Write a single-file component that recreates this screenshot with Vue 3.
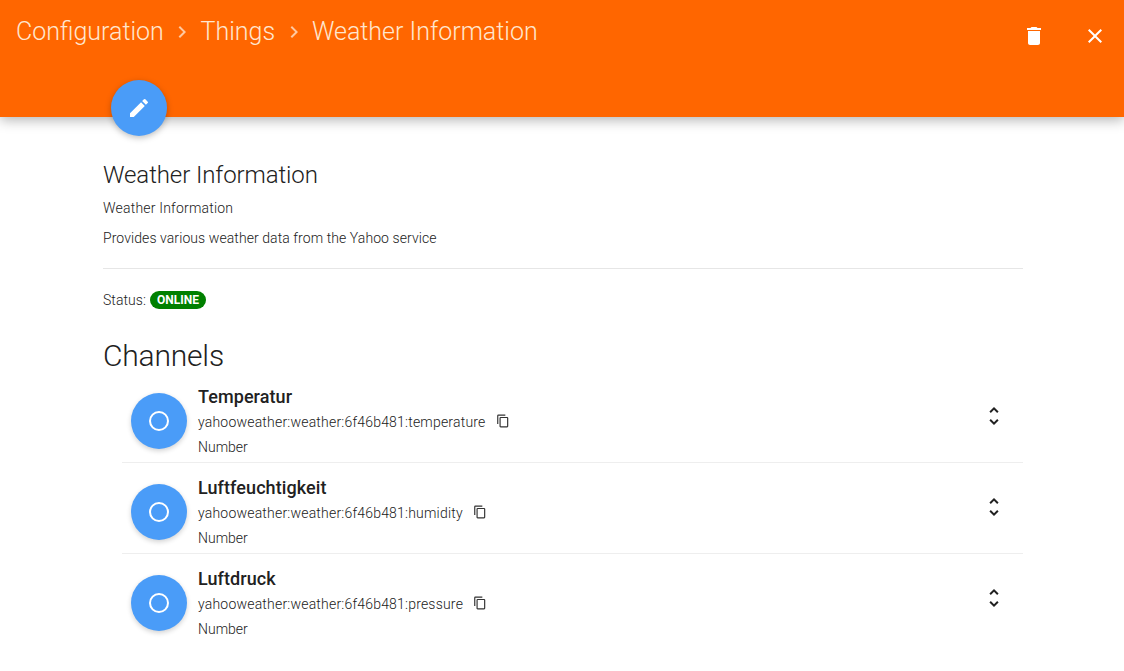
<script setup>
const channels = [
  { name: 'Temperatur', uid: 'yahooweather:weather:6f46b481:temperature', type: 'Number' },
  { name: 'Luftfeuchtigkeit', uid: 'yahooweather:weather:6f46b481:humidity', type: 'Number' },
  { name: 'Luftdruck', uid: 'yahooweather:weather:6f46b481:pressure', type: 'Number' },
]
</script>

<template>
  <div class="page">
    <header class="bar">
      <div class="crumbs">
        <span>Configuration</span>
        <svg class="chev" viewBox="0 0 24 24"><path d="M8.6 16.6 13.2 12 8.6 7.4 10 6l6 6-6 6z" /></svg>
        <span>Things</span>
        <svg class="chev" viewBox="0 0 24 24"><path d="M8.6 16.6 13.2 12 8.6 7.4 10 6l6 6-6 6z" /></svg>
        <span>Weather Information</span>
      </div>
      <div class="actions">
        <svg class="act" viewBox="0 0 24 24"><path d="M6 19c0 1.1.9 2 2 2h8c1.100 0 2-.9 2-2V7H6v12zM19 4h-3.500l-1-1h-5l-1 1H5v2h14V4z" /></svg>
        <svg class="act" viewBox="0 0 24 24"><path d="M19 6.410 17.590 5 12 10.590 6.410 5 5 6.410 10.590 12 5 17.590 6.410 19 12 13.410 17.590 19 19 17.590 13.410 12z" /></svg>
      </div>
      <button class="fab">
        <svg viewBox="0 0 24 24"><path d="M3 17.250V21h3.750L17.810 9.940l-3.750-3.750L3 17.250zM20.710 7.040a1 1 0 0 0 0-1.410l-2.340-2.340a1 1 0 0 0-1.410 0l-1.830 1.830 3.750 3.750 1.830-1.830z" /></svg>
      </button>
    </header>

    <main class="content">
      <h2 class="thing">Weather Information</h2>
      <p class="label">Weather Information</p>
      <p class="desc">Provides various weather data from the Yahoo service</p>
      <div class="status">
        <span>Status:</span>
        <span class="badge">ONLINE</span>
      </div>
      <h1 class="channels">Channels</h1>
      <ul class="list">
        <li v-for="c in channels" :key="c.uid" class="row">
          <div class="avatar"><span class="ring"></span></div>
          <div class="text">
            <div class="name">{{ c.name }}</div>
            <div class="uid">
              <span>{{ c.uid }}</span>
              <svg class="copy" viewBox="0 0 24 24"><path d="M16 1H4a2 2 0 0 0-2 2v14h2V3h12V1zm3 4H8a2 2 0 0 0-2 2v14c0 1.100.9 2 2 2h11a2 2 0 0 0 2-2V7a2 2 0 0 0-2-2zm0 16H8V7h11v14z" /></svg>
            </div>
            <div class="type">{{ c.type }}</div>
          </div>
          <svg class="unfold" viewBox="0 0 24 24"><path d="M12 5.830 15.170 9l1.410-1.410L12 3 7.410 7.590 8.830 9 12 5.830zm0 12.340L8.830 15l-1.410 1.410L12 21l4.590-4.590L15.170 15 12 18.170z" /></svg>
        </li>
      </ul>
    </main>
  </div>
</template>

<style>
html, body { margin: 0; background: #fff; overflow: hidden; }
</style>

<style scoped>
.page {
  height: 671px;
  overflow: hidden;
  font-family: Roboto, "Liberation Sans", sans-serif;
  color: #212121;
  background: #fff;
}
.bar {
  position: relative;
  height: 117px;
  box-sizing: border-box;
  padding: 14px 16px 0;
  background: #ff6600;
  display: flex;
  justify-content: space-between;
  align-items: flex-start;
  box-shadow: 0 3px 12px rgba(0, 0, 0, 0.3);
}
.crumbs {
  display: flex;
  align-items: center;
  gap: 6.4px;
  font-size: 25px;
  font-weight: 300;
  line-height: 36px;
  color: #ffe6cf;
}
.chev { width: 24px; height: 24px; fill: #ffc9a0; }
.actions {
  display: flex;
  gap: 37px;
  margin: 10px 1px 0 0;
}
.act { width: 24px; height: 24px; fill: #fff; display: block; }
.fab {
  position: absolute;
  left: 111px;
  top: 80px;
  width: 56px;
  height: 56px;
  padding: 16px;
  border: 0;
  border-radius: 50%;
  background: #4a9cf8;
  box-shadow: 0 2px 6px rgba(0, 0, 0, 0.25);
}
.fab svg { display: block; width: 24px; height: 24px; fill: #fff; }
.content {
  padding: 0 101px 0 103px;
}
.thing {
  margin: 0;
  padding-top: 41px;
  font-size: 24px;
  font-weight: 300;
  line-height: 34px;
  letter-spacing: -0.1px;
}
.label {
  margin: 7px 0 0;
  font-size: 14px;
  font-weight: 300;
  line-height: 18px;
  letter-spacing: 0.2px;
}
.desc {
  margin: 0;
  padding: 11px 0 20px;
  font-size: 14px;
  font-weight: 300;
  line-height: 20px;
  letter-spacing: 0.08px;
  border-bottom: 1px solid #e6e6e6;
}
.status {
  display: flex;
  align-items: center;
  gap: 4px;
  margin-top: 22px;
  font-size: 14px;
  font-weight: 300;
  line-height: 18px;
  letter-spacing: 0.05px;
}
.badge {
  padding: 0 7px;
  border-radius: 9px;
  background: #008000;
  color: #fff;
  font-size: 12px;
  font-weight: 700;
  line-height: 18px;
}
.channels {
  margin: 27px 0 0;
  font-size: 30px;
  font-weight: 300;
  line-height: 40px;
  letter-spacing: -0.2px;
}
.list {
  list-style: none;
  margin: -4px 0 0 19px;
  padding: 0;
}
.row {
  display: flex;
  align-items: center;
  height: 91px;
  box-sizing: border-box;
  padding: 0 8px 0 9px;
  border-bottom: 1px solid #eee;
}
.row:last-child { border-bottom-color: transparent; }
.avatar {
  flex: none;
  width: 56px;
  height: 56px;
  margin-top: 8px;
  border-radius: 50%;
  background: #4a9cf8;
  box-shadow: 0 2px 5px rgba(0, 0, 0, 0.18);
  display: flex;
  align-items: center;
  justify-content: center;
}
.ring {
  width: 16px;
  height: 16px;
  border: 2px solid #fff;
  border-radius: 50%;
}
.text {
  flex: 1;
  margin-left: 11px;
  align-self: flex-start;
  padding-top: 13px;
}
.name {
  font-size: 18px;
  font-weight: 500;
  line-height: 24px;
  letter-spacing: 0.08px;
}
.uid {
  display: flex;
  align-items: center;
  gap: 10px;
  margin-top: 1px;
  font-size: 14px;
  font-weight: 300;
  line-height: 24px;
  letter-spacing: 0.2px;
}
.copy { width: 14px; height: 14px; fill: #333; margin-bottom: 2px; }
.type {
  margin-top: 1px;
  font-size: 14px;
  font-weight: 300;
  line-height: 24px;
}
.unfold { flex: none; width: 24px; height: 24px; fill: #212121; margin: 0 9px 2px 0; }
</style>
